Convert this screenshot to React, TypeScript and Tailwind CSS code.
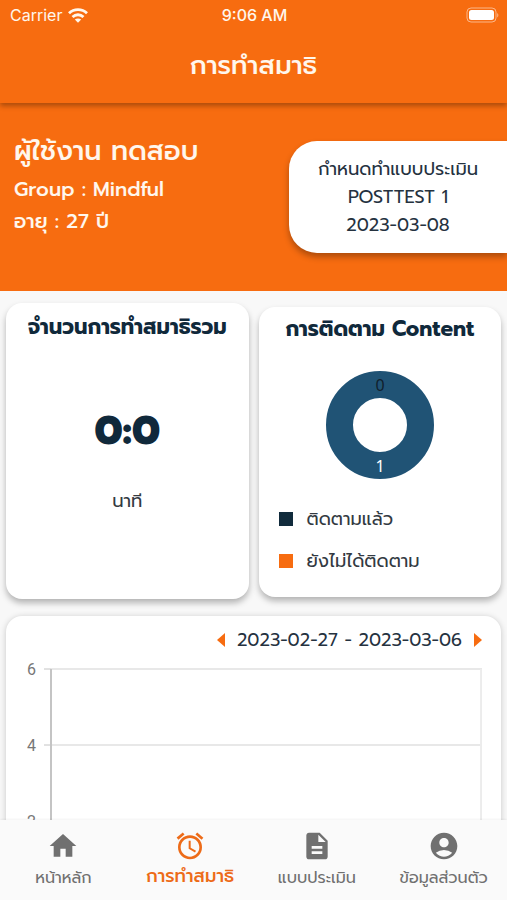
import { useState } from 'react';
import type { IconType } from 'react-icons';
import { MdAccessAlarm, MdAccountCircle, MdDescription, MdHome } from 'react-icons/md';

type NavItem = {
  id: string;
  label: string;
  icon: IconType;
};

const NAV_ITEMS: NavItem[] = [
  { id: 'home', label: 'หน้าหลัก', icon: MdHome },
  { id: 'meditation', label: 'การทำสมาธิ', icon: MdAccessAlarm },
  { id: 'assessment', label: 'แบบประเมิน', icon: MdDescription },
  { id: 'profile', label: 'ข้อมูลส่วนตัว', icon: MdAccountCircle },
];

const Y_TICKS = [6, 4, 2, 0];
const TICK_GAP = 76;

const StatusBar = () => (
  <div className="grid h-[30px] grid-cols-3 items-center pr-2 pl-2.5 font-['Inter',sans-serif] text-base text-orange-50">
    <div className="flex items-center gap-1.5">
      <span>Carrier</span>
      <svg viewBox="0 0 20 15" className="h-[15px] w-5" fill="none" stroke="currentColor" strokeWidth="2.8">
        <path d="M1 5.2C6 .4 14 .4 19 5.2" />
        <path d="M4.5 9C7.7 6 12.3 6 15.5 9" />
        <path d="M10 14.8 6.8 11.6C8.6 10 11.4 10 13.2 11.6Z" fill="currentColor" stroke="none" />
      </svg>
    </div>
    <span className="text-center font-medium">9:06 AM</span>
    <svg viewBox="0 0 33 16" className="h-4 w-[33px] justify-self-end">
      <rect x="1" y="1" width="29" height="14" rx="4" fill="none" stroke="#fff" strokeOpacity=".5" />
      <rect x="3" y="3" width="25" height="10" rx="2.5" fill="#fff" />
      <path d="M31.2 6v4.4c1.6-.7 1.6-3.7 0-4.4Z" fill="#fff" fillOpacity=".5" />
    </svg>
  </div>
);

const UserPanel = () => (
  <section className="flex items-start justify-between bg-[#f76c10] pt-7 pb-[38px]">
    <div className="pl-3.5 font-medium text-orange-50">
      <h2 className="mb-0.5 text-[27px] leading-10">ผู้ใช้งาน ทดสอบ</h2>
      <p className="text-xl leading-8">Group : Mindful</p>
      <p className="text-xl leading-8">อายุ : 27 ปี</p>
    </div>
    <div className="mt-2.5 w-[43%] rounded-l-[28px] bg-white py-3.5 text-center text-lg leading-7 text-[#25323f] shadow-[0_4px_6px_rgba(0,0,0,0.3)]">
      <p>กำหนดทำแบบประเมิน</p>
      <p>POSTTEST 1</p>
      <p>2023-03-08</p>
    </div>
  </section>
);

const TotalCard = () => (
  <section className="flex min-h-[296px] flex-1 flex-col items-center rounded-2xl bg-white pt-2 shadow-[0_4px_6px_rgba(0,0,0,0.28)]">
    <h3 className="text-[21px] leading-8 font-bold text-[#10293b]">จำนวนการทำสมาธิรวม</h3>
    <p className="mt-16 text-[40px] leading-12 font-extrabold text-[#10293b]">0:0</p>
    <p className="mt-8 text-lg leading-7 text-[#333a42]">นาที</p>
  </section>
);

const FollowCard = () => (
  <section className="mt-1 mb-0.5 flex flex-1 flex-col rounded-2xl bg-white pt-2 shadow-[0_4px_6px_rgba(0,0,0,0.28)]">
    <h3 className="text-center text-[21px] leading-7 font-bold text-[#10293b]">การติดตาม Content</h3>
    <svg
      viewBox="0 0 108 108"
      className="mt-7 size-[108px] self-center font-['Noto_Sans',sans-serif]"
      fontSize="16"
      textAnchor="middle"
    >
      <circle cx="54" cy="54" r="40.5" fill="none" stroke="#205375" strokeWidth="27" />
      <text x="54" y="20" fill="#10202c">0</text>
      <text x="54" y="101" fill="#fff">1</text>
    </svg>
    <ul className="mt-6 flex flex-col gap-2.5 pl-5 text-lg leading-8 text-[#333a42]">
      <li className="flex items-center gap-3.5">
        <span className="size-3.5 bg-[#112b3c]" />
        ติดตามแล้ว
      </li>
      <li className="flex items-center gap-3.5">
        <span className="size-3.5 bg-[#f76c10]" />
        ยังไม่ได้ติดตาม
      </li>
    </ul>
  </section>
);

const WeeklyChart = () => (
  <section className="mx-1.5 mt-[17px] rounded-2xl bg-white pt-2 pr-[19px] pb-6 pl-4 shadow-[0_1px_6px_rgba(0,0,0,0.2)]">
    <div className="flex h-8 items-center justify-end gap-3 text-lg text-[#25323f]">
      <button type="button" aria-label="สัปดาห์ก่อนหน้า" className="text-[#f76c10]">
        <svg viewBox="0 0 8 14" className="h-3.5 w-2" fill="currentColor">
          <path d="M8 0v14L0 7Z" />
        </svg>
      </button>
      <span>2023-02-27 - 2023-03-06</span>
      <button type="button" aria-label="สัปดาห์ถัดไป" className="text-[#f76c10]">
        <svg viewBox="0 0 8 14" className="h-3.5 w-2" fill="currentColor">
          <path d="M0 0v14l8-7Z" />
        </svg>
      </button>
    </div>
    <svg className="h-[260px] w-full font-['Roboto',sans-serif]" fontSize="16">
      {Y_TICKS.map((tick, index) => {
        const y = 13 + index * TICK_GAP;
        return (
          <g key={tick}>
            <text x="5" y={y + 6} fill="#777">{tick}</text>
            <line x1="22" x2="29" y1={y} y2={y} stroke="#c4c4c4" strokeWidth="1" />
            <line x1="29" x2="100%" y1={y} y2={y} stroke="#e8e8e8" strokeWidth="2" />
          </g>
        );
      })}
      <line x1="29" x2="29" y1="13" y2="241" stroke="#c4c4c4" strokeWidth="2" />
      <line x1="99.8%" x2="99.8%" y1="13" y2="241" stroke="#ececec" strokeWidth="2" />
    </svg>
  </section>
);

const App = () => {
  const [activeTab, setActiveTab] = useState('meditation');

  return (
    <div className="flex h-screen flex-col bg-[#f8f8f8] font-['Prompt','Kanit','Noto_Sans_Thai','Noto_Sans',sans-serif]">
      <header className="relative z-10 bg-[#f76c10] shadow-[0_3px_5px_rgba(0,0,0,0.3)]">
        <StatusBar />
        <h1 className="pt-4 pb-[17px] text-center text-[26px] leading-10 font-medium text-orange-50">การทำสมาธิ</h1>
      </header>

      <main className="min-h-0 flex-1 overflow-y-auto pb-4 [scrollbar-width:none]">
        <UserPanel />
        <div className="mt-3 flex gap-2.5 px-1.5">
          <TotalCard />
          <FollowCard />
        </div>
        <WeeklyChart />
      </main>

      <nav className="z-10 grid h-20 shrink-0 grid-cols-4 bg-[#fafafa] shadow-[0_-1px_2px_rgba(0,0,0,0.05)]">
        {NAV_ITEMS.map(({ id, label, icon: Icon }) => {
          const isActive = id === activeTab;
          return (
            <button
              key={id}
              type="button"
              aria-current={isActive ? 'page' : undefined}
              onClick={() => setActiveTab(id)}
              className={`flex flex-col items-center pt-2.5 whitespace-nowrap ${
                isActive ? 'text-lg leading-7 font-medium text-[#ed6b18]' : 'text-base leading-8 text-[#707070]'
              }`}
            >
              <Icon className="size-8 shrink-0" />
              {label}
            </button>
          );
        })}
      </nav>
    </div>
  );
};

export default App;
